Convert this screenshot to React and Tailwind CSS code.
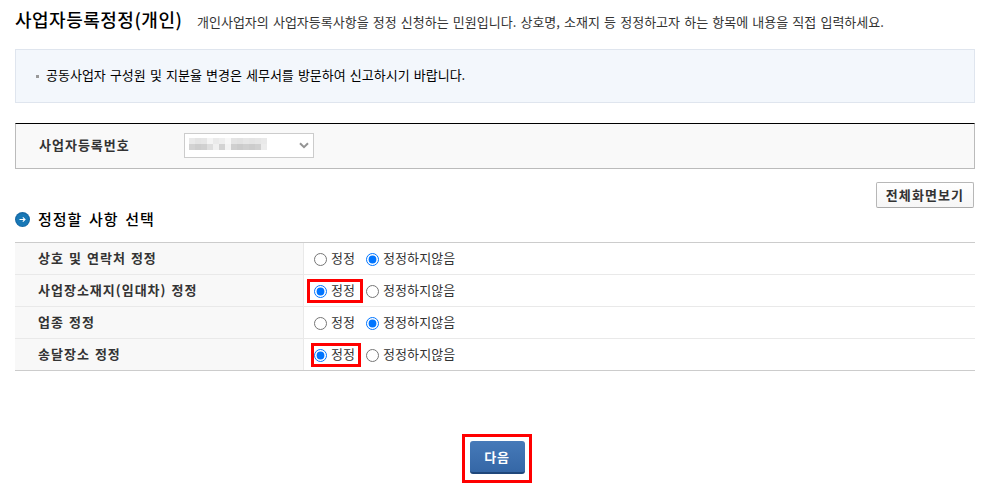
const rows = [
  { label: '상호 및 연락처 정정', edit: false, mark: '' },
  { label: '사업장소재지(임대차) 정정', edit: true, mark: '-left-[7px] -top-[12px] h-[24px] w-[56px]' },
  { label: '업종 정정', edit: false, mark: '' },
  { label: '송달장소 정정', edit: true, mark: '-left-[3px] -top-[12px] h-[24px] w-[50px]' },
];

const mosaic = [
  ['#e9e9e9', '#e4e4e4', '#e6e6e6', '#f4f4f4', '#eaeaea', '#eeeeee', '#f7f7f7', '#e4e4e4', '#e2e2e2', '#e6e6e6', '#e4e4e4', '#e6e6e6', '#e9e9e9'],
  ['#d2d2d2', '#cdcdcd', '#d0d0d0', '#dedede', '#f0f0f0', '#d3d3d3', '#f3f3f3', '#cfcfcf', '#cbcbcb', '#cfcfcf', '#cccccc', '#d0d0d0', '#ececec'],
];

function Radio({ checked }) {
  return (
    <svg className="block h-[13px] w-[13px] shrink-0" viewBox="0 0 13 13">
      <circle cx="6.5" cy="6.5" r="6" fill="#fff" stroke={checked ? '#0075ff' : '#767676'} />
      {checked && <circle cx="6.5" cy="6.5" r="3.9" fill="#0075ff" />}
    </svg>
  );
}

export default function App() {
  return (
    <main className="h-[501px] w-[1000px] overflow-hidden bg-white px-[15px] pr-[25px] font-['Noto_Sans_CJK_KR',sans-serif] text-[13px] text-[#333]">
      <header className="flex h-[49px] items-start whitespace-nowrap">
        <h1 className="mt-[7px] w-[182px] text-[18px] leading-[24px] font-medium tracking-[0.5px] text-black">사업자등록정정(개인)</h1>
        <p className="mt-[12px] leading-[20px] [word-spacing:1.25px]">
          개인사업자의 사업자등록사항을 정정 신청하는 민원입니다. 상호명, 소재지 등 정정하고자 하는 항목에 내용을 직접 입력하세요.
        </p>
      </header>

      <section className="flex h-[54px] items-center border border-[#dfe5ee] bg-[#f3f7fc] pl-[20px]">
        <span className="h-[3px] w-[3px] bg-[#999]" />
        <p className="-mt-[2px] ml-[7px] leading-[20px] text-black [word-spacing:1.2px]">공동사업자 구성원 및 지분율 변경은 세무서를 방문하여 신고하시기 바랍니다.</p>
      </section>

      <section className="mt-[20px] flex h-[46px] items-center border border-[#bbb] border-t-black bg-[#f9f9f9] pl-[23px]">
        <strong className="-mt-[2px] w-[145px] font-bold tracking-[1px]">사업자등록번호</strong>
        <div className="-mt-[2px] flex h-[25px] w-[130px] items-center justify-between border border-[#ccc] bg-white pr-[4px] pl-[4px]">
          <div className="mb-[2px]">
            {mosaic.map((line, i) => (
              <div key={i} className="flex">
                {line.map((color, j) => (
                  <span key={j} className="h-[6px] w-[6px]" style={{ backgroundColor: color }} />
                ))}
              </div>
            ))}
          </div>
          <svg className="h-[7px] w-[10px]" viewBox="0 0 10 7" fill="none" stroke="#949494" strokeWidth="2">
            <path d="M1 1.2 5 5.2 9 1.2" />
          </svg>
        </div>
      </section>

      <div className="mt-[13px] flex h-[26px] justify-end pr-px">
        <button className="h-[26px] w-[98px] rounded-[2px] border border-[#b7b7b7] border-b-[#aaa] bg-linear-to-b from-white to-[#f6f6f6] text-[13px] leading-[22px] font-bold tracking-[1.1px] whitespace-nowrap">전체화면보기</button>
      </div>

      <div className="mt-[1px] flex h-[33px] items-start">
        <svg className="mt-[3px] h-[15px] w-[15px]" viewBox="0 0 15 15">
          <circle cx="7.5" cy="7.5" r="7.5" fill="#1769a5" />
          <circle cx="7.5" cy="7.8" r="6.3" fill="#1878b6" />
          <path d="M4.5 7.5h5.4M7.8 5.3l2.2 2.2-2.2 2.2" fill="none" stroke="#fff" strokeWidth="1.1" />
        </svg>
        <h2 className="ml-[8px] text-[15px] leading-[20px] font-medium tracking-[1px] text-black [word-spacing:2.2px]">정정할 사항 선택</h2>
      </div>

      <section className="border-y border-[#ccc]">
        {rows.map((row, i) => (
          <div key={row.label} className={i < 3 ? 'flex h-[32px] border-b border-[#e9e9e9]' : 'flex h-[31px]'}>
            <div className="flex w-[289px] items-center border-r border-[#e9e9e9] bg-[#f8f8f8] pb-px pl-[23px] font-bold tracking-[1px] [word-spacing:1.1px]">{row.label}</div>
            <div className="flex items-center pl-[10px]">
              <div className="relative mt-px flex h-[16px] w-[52px] items-center">
                <Radio checked={row.edit} />
                <span className="-mt-[2px] ml-[4px]">정정</span>
                {row.mark && <span className={`absolute translate-y-[8px] border-[3px] border-[#f00] ${row.mark}`} />}
              </div>
              <div className="mt-px flex h-[16px] items-center">
                <Radio checked={!row.edit} />
                <span className="-mt-[2px] ml-[4px] tracking-[0.1px]">정정하지않음</span>
              </div>
            </div>
          </div>
        ))}
      </section>

      <div className="mt-[63px] ml-[447px] flex h-[49px] w-[70px] items-start justify-center border-[3px] border-[#f00] pt-[4px]">
        <button className="h-[33px] w-[55px] rounded-[3px] border-b-2 border-[#1f477b] bg-linear-to-b from-[#467ab9] to-[#3567a6] text-[13px] font-bold tracking-[0.8px] text-white">다음</button>
      </div>
    </main>
  );
}
